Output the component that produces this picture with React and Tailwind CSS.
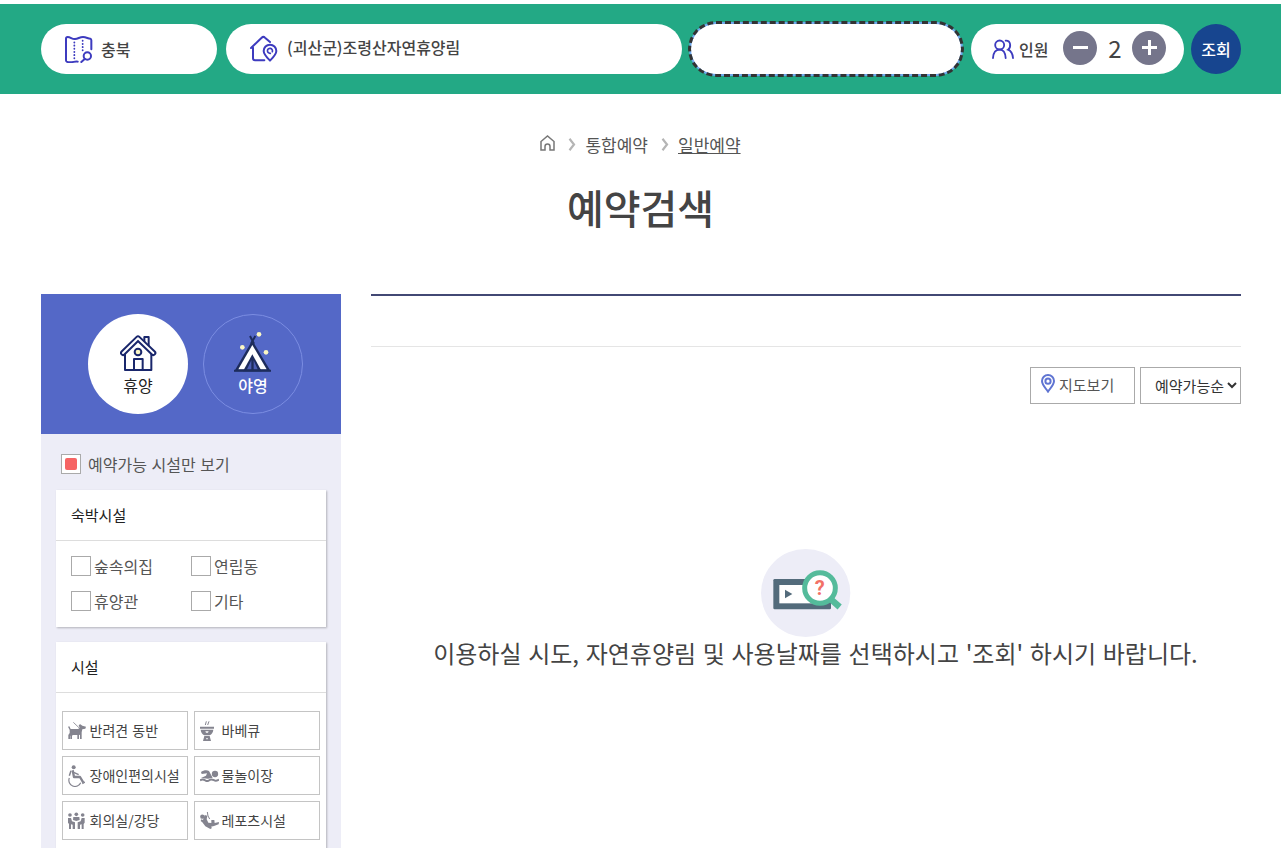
import { useState } from 'react';

const LODGING = ['숲속의집', '연립동', '휴양관', '기타'];

function RegionIcon() {
  return (
    <svg width="28" height="28" viewBox="0 0 84 84" fill="none" stroke="#3d3bbf" strokeWidth="6" strokeLinecap="round" strokeLinejoin="round" className="shrink-0">
      <path d="M38 80C30 77 18 86 5 80Q3 79 3 76V11Q3 6 8 6C17 6 21 13 30 12C40 11 44 6 54 6C64 6 69 11 76 11Q79 12 79 16V43" />
      <path d="M28 22V76M53 17V46" strokeWidth="5.5" strokeDasharray="0.5 9" />
      <circle cx="67" cy="63" r="11" />
      <path d="M59 72L49 81" />
    </svg>
  );
}

function ForestIcon() {
  return (
    <svg width="28" height="28" viewBox="0 0 84 84" fill="none" stroke="#3d3bbf" strokeWidth="6" strokeLinecap="round" strokeLinejoin="round" className="shrink-0">
      <path d="M3 39L35 8Q40 3 45 8L60 21" />
      <path d="M9 38V70Q9 76 15 76H43" />
      <path d="M60 77C50 67 41 58 41 48A19 19 0 0 1 79 48C79 58 70 67 60 77Z" />
      <path d="M67 50A7.5 7.5 0 1 0 61 55" strokeWidth="5" />
    </svg>
  );
}

function PeopleIcon() {
  return (
    <svg width="22" height="20" viewBox="0 0 66 60" fill="none" stroke="#3d3bbf" strokeWidth="5.5" strokeLinecap="round" className="shrink-0">
      <circle cx="23" cy="18" r="13.5" />
      <path d="M3 57C4 42 11 32 23 32S40 42 41 57" />
      <path d="M41 5C57 4 58 25 48 32C58 36 62 45 63 57" />
    </svg>
  );
}

function CabinIcon() {
  return (
    <svg width="37" height="38" viewBox="0 0 111 114" fill="none" stroke="#1a276c" strokeWidth="6" strokeLinejoin="round">
      <path d="M73 28V9H86V36" fill="#fff" />
      <path d="M15 56V108H94V56" />
      <path d="M9 57L54 13L100 57" strokeWidth="18" strokeLinecap="round" />
      <path d="M9 57L54 13L100 57" stroke="#fff" strokeWidth="6" strokeLinecap="round" />
      <circle cx="54" cy="54" r="10" fill="#fbf7c4" />
      <path d="M42 107V75H68V107" />
    </svg>
  );
}

function TentIcon() {
  return (
    <svg width="37" height="41" viewBox="0 0 111 123" className="mr-px">
      <path d="M55 28L1 121H110Z" fill="#1d2c5c" />
      <path d="M48 15L60 38M64 15L51 38" stroke="#1d2c5c" strokeWidth="6" />
      <path d="M55 42L13 115H98Z" fill="#fff" />
      <path d="M55 70L27 121H83Z" fill="#1d2c5c" />
      <path d="M52 88L39 115H52ZM59 88V115H71Z" fill="#4a5db4" />
      <path d="M0 119H111" stroke="#1d2c5c" strokeWidth="6" />
      <g fill="#fbf7c4">
        <circle cx="75" cy="10" r="7" />
        <circle cx="25" cy="49" r="7" />
        <circle cx="96" cy="64" r="7" />
      </g>
    </svg>
  );
}

function EmptyIcon() {
  return (
    <svg width="90" height="88" viewBox="0 0 270 264">
      <ellipse cx="134" cy="132" rx="134" ry="132" fill="#ededf7" />
      <rect x="37" y="90" width="173" height="91" rx="4" fill="#536b7b" />
      <rect x="55" y="108" width="140" height="55" fill="#fff" />
      <path d="M72 122L94 135L72 148Z" fill="#536b7b" />
      <path d="M204 146L236 174" stroke="#54bb9b" strokeWidth="19" />
      <circle cx="177" cy="117" r="46" fill="#fff" stroke="#54bb9b" strokeWidth="15" />
      <text x="176" y="139" textAnchor="middle" fontFamily="Roboto" fontWeight="700" fontSize="60" fill="#f27166">?</text>
    </svg>
  );
}

function DogIcon() {
  return (
    <svg width="18" height="19" viewBox="0 0 54 57" fill="#84848f">
      <path d="M0 17L4 16L8 24H30L35 21L32 12L37 10L43 14L54 17L52 23L43 25L41 34V54H36V42L33 41V54H28V42H14L12 45V54H7V44H6V54H1V42L5 36V27Z" />
      <path d="M16 4L36 23" stroke="#84848f" strokeWidth="2.5" />
    </svg>
  );
}

function BarbecueIcon() {
  return (
    <svg width="14" height="21" viewBox="0 0 42 63" fill="#84848f">
      <path d="M19 4L16 15M27 4L23 15" stroke="#84848f" strokeWidth="3" />
      <path d="M0 20H42V26H0ZM2 29H40C39 38 35 43 29 46H13C7 43 3 38 2 29Z" />
      <path d="M13 48H29L33 63H9Z" />
      <path d="M16 34H26L24 38H18ZM19 54H23V58H19Z" fill="#fff" />
    </svg>
  );
}

function WheelchairIcon() {
  return (
    <svg width="17" height="22" viewBox="0 0 51 66" fill="none" stroke="#84848f">
      <circle cx="17" cy="7" r="6" fill="#84848f" stroke="none" />
      <path d="M14 16L18 36H36L46 53" strokeWidth="7" strokeLinejoin="round" />
      <path d="M17 22L32 29M9 17L4 32" strokeWidth="4.5" />
      <path d="M4 39A18 18 0 0 0 38 53" strokeWidth="3.5" />
      <path d="M43 56L51 51" strokeWidth="4" />
    </svg>
  );
}

function SwimIcon() {
  return (
    <svg width="19" height="12" viewBox="0 0 57 36" fill="none" stroke="#84848f">
      <circle cx="45" cy="12" r="9.5" fill="#84848f" stroke="none" />
      <path d="M3 6C10 1 20 -1 27 3L38 23L24 26L3 24L18 17L21 10L5 12Z" fill="#84848f" stroke="none" />
      <path d="M0 31C6 27 10 27 15 31S24 34 29 30S39 29 43 31S51 32 57 29" strokeWidth="6" />
    </svg>
  );
}

function MeetingIcon() {
  return (
    <svg width="17" height="18" viewBox="0 0 51 54" fill="#84848f">
      <circle cx="6" cy="9" r="5.5" />
      <circle cx="25" cy="7" r="5.5" />
      <circle cx="44" cy="9" r="5.5" />
      <path d="M0 18H9L12 28L21 31V51H14V38L9 37V51H3V36L0 32Z" />
      <path d="M50 18H41L38 28L29 31V51H36V38L41 37V51H47V36L50 32Z" />
      <path d="M16 15H34L35 24L25 27L15 24Z" />
    </svg>
  );
}

function LeisureIcon() {
  return (
    <svg width="19" height="17" viewBox="0 0 57 51" fill="#84848f">
      <circle cx="7" cy="14" r="6.5" />
      <path d="M9 24L14 9L22 11L20 22L25 32L34 33L34 24L43 24L44 33L57 30L56 37L42 42L33 44L36 48L31 51L16 43L7 31L2 27L4 22Z" />
      <path d="M22 0L24 12L29 21" fill="none" stroke="#84848f" strokeWidth="3" />
    </svg>
  );
}

const FACILITIES = [
  { label: '반려견 동반', Icon: DogIcon },
  { label: '바베큐', Icon: BarbecueIcon },
  { label: '장애인편의시설', Icon: WheelchairIcon },
  { label: '물놀이장', Icon: SwimIcon },
  { label: '회의실/강당', Icon: MeetingIcon },
  { label: '레포츠시설', Icon: LeisureIcon },
];

function Chevron() {
  return (
    <svg width="8" height="13" viewBox="0 0 8 13" fill="none" stroke="#b5b5b5" strokeWidth="2.2" className="mr-[9px] mb-0.5 ml-[13px]">
      <path d="M1.5 0.8L6 6.5L1.5 12.2" />
    </svg>
  );
}

function SearchBar() {
  const [count, setCount] = useState(2);

  return (
    <div className="mt-1 h-[90px] shrink-0 bg-[#23a985] pt-5">
      <div className="ml-[41px] flex w-[1200px] text-base font-medium text-[#444]">
        <button type="button" className="flex h-[50px] w-44 items-center rounded-full bg-white pl-6">
          <RegionIcon />
          <span className="ml-2">충북</span>
        </button>
        <button type="button" className="ml-[9px] flex h-[50px] w-[456px] items-center rounded-full bg-white pl-6">
          <ForestIcon />
          <span className="mb-1 ml-[9px]">(괴산군)조령산자연휴양림</span>
        </button>
        <button
          type="button"
          aria-label="날짜 선택"
          className="ml-[9px] h-[50px] w-[270px] rounded-full bg-white ring-2 ring-[#6fa9ee] outline-[3px] outline-[#333] outline-dashed"
        />
        <div className="ml-2.5 flex h-[50px] w-[213px] items-center rounded-full bg-white pl-[21px]">
          <PeopleIcon />
          <span className="ml-[5px] w-11">인원</span>
          <button
            type="button"
            aria-label="감소"
            onClick={() => setCount((c) => Math.max(1, c - 1))}
            className="mb-0.5 flex size-[34px] items-center justify-center rounded-full bg-[#75758b]"
          >
            <span className="mb-px h-[3px] w-[15px] bg-white" />
          </button>
          <span className="mb-0.5 w-[35px] pl-px text-center text-2xl font-normal">{count}</span>
          <button
            type="button"
            aria-label="증가"
            onClick={() => setCount((c) => c + 1)}
            className="mb-0.5 flex size-[34px] items-center justify-center rounded-full bg-[#75758b]"
          >
            <svg width="15" height="15" viewBox="0 0 15 15" stroke="#fff" strokeWidth="3" className="mb-px">
              <path d="M0 7.5H15M7.5 0V15" />
            </svg>
          </button>
        </div>
        <button type="button" className="ml-[7px] size-[50px] rounded-full bg-[#17458f] text-white">
          조회
        </button>
      </div>
    </div>
  );
}

function Sidebar() {
  const [onlyAvailable, setOnlyAvailable] = useState(true);

  return (
    <aside className="w-[300px] bg-[#ededf7]">
      <div className="flex h-[140px] gap-[15px] bg-[#5468c7] pt-5 pl-[47px]">
        <button type="button" className="flex size-[100px] flex-col items-center rounded-full bg-white pt-5 text-base text-[#222]">
          <CabinIcon />
          <span className="mt-px">휴양</span>
        </button>
        <button type="button" className="flex size-[100px] flex-col items-center rounded-full border border-[#7b8de2] pt-4 text-base font-medium text-white">
          <TentIcon />
          <span className="mt-px">야영</span>
        </button>
      </div>

      <label className="mt-5 ml-5 flex h-5 items-center text-base text-[#555]">
        <input type="checkbox" className="sr-only" checked={onlyAvailable} onChange={() => setOnlyAvailable((v) => !v)} />
        <span className="flex size-5 items-center justify-center border border-[#aaa] bg-white">
          {onlyAvailable && <span className="size-3 rounded-xs bg-[#f66464]" />}
        </span>
        <span className="ml-[7px] [word-spacing:1px]">예약가능 시설만 보기</span>
      </label>

      <section className="mt-4 ml-[15px] h-[137px] w-[270px] bg-white shadow-[1px_1px_2px_rgba(0,0,0,0.25)]">
        <h2 className="flex h-[51px] items-center border-b border-[#ddd] pl-[15px] text-[15px] text-[#222]">숙박시설</h2>
        <div className="grid grid-cols-[120px_120px] gap-y-[15px] pt-[15px] pl-[15px] text-base text-[#555]">
          {LODGING.map((name) => (
            <label key={name} className="flex h-5 items-center">
              <input type="checkbox" className="size-5 appearance-none border border-[#aaa] bg-white checked:bg-[#f66464]" />
              <span className="ml-[3px]">{name}</span>
            </label>
          ))}
        </div>
      </section>

      <section className="mt-[15px] ml-[15px] h-[260px] w-[270px] bg-white shadow-[1px_1px_2px_rgba(0,0,0,0.25)]">
        <h2 className="flex h-[51px] items-center border-b border-[#ddd] pl-[15px] text-[15px] text-[#222]">시설</h2>
        <div className="grid grid-cols-[126px_126px] gap-1.5 px-1.5 pt-[18px] text-sm text-[#444]">
          {FACILITIES.map(({ label, Icon }) => (
            <button key={label} type="button" className="flex h-[39px] items-center border border-[#c4c4c4] pl-[5px] whitespace-nowrap">
              <span className="w-[21.5px] shrink-0">
                <Icon />
              </span>
              <span className="mb-0.5 [word-spacing:1px]">{label}</span>
            </button>
          ))}
        </div>
      </section>
    </aside>
  );
}

function Results() {
  return (
    <main className="w-[870px] border-t-2 border-[#424874]">
      <div className="h-[51px] border-b border-[#e5e5e5]" />
      <div className="mt-5 flex justify-end gap-[5px] text-[15px]">
        <button type="button" className="flex h-[37px] w-[105px] items-center border border-[#aaa] pl-2.5 text-[#555]">
          <svg width="14" height="19" viewBox="0 0 14 19" fill="none" stroke="#5f74d2" strokeWidth="2" className="mb-1">
            <path d="M7 17.6C4 13.5 1 10.5 1 7A6 6 0 0 1 13 7C13 10.5 10 13.5 7 17.6Z" />
            <circle cx="7" cy="7.2" r="2.6" />
          </svg>
          <span className="ml-1">지도보기</span>
        </button>
        <select className="h-[37px] w-[101px] border border-[#aaa] bg-white pl-2.5 text-[#333]">
          <option>예약가능순</option>
          <option>이름순</option>
        </select>
      </div>
      <div className="mt-[145px] flex flex-col items-center">
        <EmptyIcon />
        <p className="pl-[19px] text-2xl leading-[31px] whitespace-nowrap text-[#444] [word-spacing:1.3px]">
          이용하실 시도, 자연휴양림 및 사용날짜를 선택하시고 '조회' 하시기 바랍니다.
        </p>
      </div>
    </main>
  );
}

export default function App() {
  return (
    <div className="flex h-[848px] flex-col overflow-hidden bg-white font-['Noto_Sans_CJK_KR',sans-serif]">
      <SearchBar />
      <nav className="mt-[39px] flex h-6 items-center justify-center text-[17px] text-[#555]">
        <svg width="15" height="16" viewBox="0 0 15 16" fill="none" stroke="#777" strokeWidth="1.5" className="mb-1">
          <path d="M1 15V6.5L7.5 1L14 6.5V15H10V11.5A2.5 2.5 0 0 0 5 11.5V15Z" />
        </svg>
        <Chevron />
        <span>통합예약</span>
        <Chevron />
        <a href="#" className="underline">일반예약</a>
      </nav>
      <h1 className="mt-5 mb-[57px] text-center text-[40px] leading-[60px] font-medium text-[#444]">예약검색</h1>
      <div className="ml-[41px] flex w-[1200px] flex-1 gap-[30px]">
        <Sidebar />
        <Results />
      </div>
    </div>
  );
}
